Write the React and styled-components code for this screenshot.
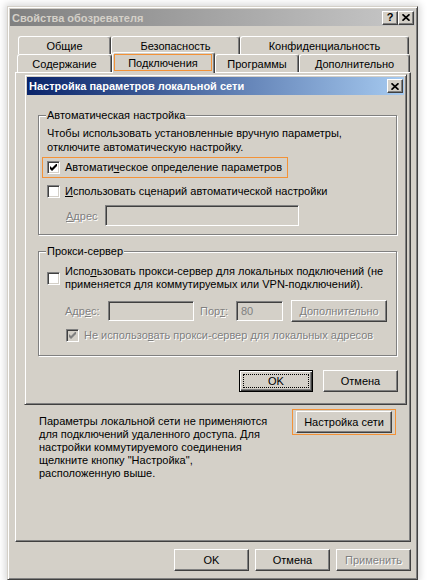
import React from 'react';
import styled, { createGlobalStyle, css } from 'styled-components';

const GlobalStyle = createGlobalStyle`
  html, body {
    margin: 0;
    padding: 0;
    background: #fff;
  }
  body {
    font-family: "Liberation Sans", Arial, sans-serif;
    font-size: 11px;
    color: #000;
  }
  #root {
    padding: 6px 0 0 7px;
  }
`;

const raised = css`
  border: 1px solid;
  border-color: #fff #404040 #404040 #fff;
  box-shadow: inset -1px -1px 0 #808080;
`;

const sunken = css`
  border: 1px solid;
  border-color: #808080 #fff #fff #808080;
  box-shadow: inset 1px 1px 0 #404040, inset -1px -1px 0 #d4d0c8;
`;

const disabledText = css`
  color: #808080;
  text-shadow: 1px 1px 0 #fff;
`;

const Window = styled.div`
  box-sizing: border-box;
  width: 411px;
  height: 574px;
  background: #d4d0c8;
  border: 1px solid;
  border-color: #d4d0c8 #404040 #404040 #d4d0c8;
  box-shadow: inset 1px 1px 0 #fff, inset -1px -1px 0 #808080,
    0 0 7px 2px rgba(0, 0, 0, 0.16);
  padding: 2px;
  display: flex;
  flex-direction: column;
`;

const TitleBar = styled.div`
  height: 17px;
  display: flex;
  align-items: center;
  padding: 0 1px 0 2px;
  background: ${p => p.$active
    ? 'linear-gradient(to right, #0a246a, #a6caf0)'
    : 'linear-gradient(to right, #808080, #c8c8c8)'};
  color: ${p => (p.$active ? '#fff' : '#d4d0c8')};
  font-weight: bold;
  font-size: 11px;
`;

const TitleText = styled.span`
  flex: 1;
  white-space: nowrap;
`;

const CaptionButton = styled.div`
  box-sizing: border-box;
  width: 16px;
  height: 14px;
  background: #d4d0c8;
  ${raised};
  display: flex;
  align-items: center;
  justify-content: center;
  color: #000;
  font-weight: bold;
  font-size: 11px;
  line-height: 1;
`;

const Body = styled.div`
  flex: 1;
  display: flex;
  flex-direction: column;
  padding: 10px 4px 0 5px;
`;

const TabRow = styled.div`
  display: flex;
  align-items: flex-start;
  height: 18px;
  padding-left: ${p => p.$indent}px;
`;

const Tab = styled.div`
  box-sizing: border-box;
  width: ${p => p.$w}px;
  height: 18px;
  background: #d4d0c8;
  border-top: 1px solid #fff;
  border-left: 1px solid #fff;
  border-right: 1px solid #404040;
  box-shadow: inset -1px 0 0 #808080;
  border-radius: 3px 3px 0 0;
  display: flex;
  align-items: center;
  justify-content: center;
  white-space: nowrap;
  ${p => p.$active && css`
    position: relative;
    z-index: 1;
    height: 21px;
    margin-top: -2px;
    align-items: flex-start;
    justify-content: flex-start;
    padding: 1px 0 0 1px;
  `}
`;

const TabMark = styled.span`
  box-sizing: border-box;
  width: 98px;
  height: 17px;
  border: 1px solid #f39237;
  display: flex;
  align-items: center;
  justify-content: center;
`;

const Panel = styled.div`
  box-sizing: border-box;
  width: 396px;
  height: 470px;
  border: 1px solid;
  border-color: #fff #404040 #404040 #fff;
  box-shadow: inset -1px -1px 0 #808080;
  padding: 1px 3px 0 8px;
  display: flex;
  flex-direction: column;
`;

const Dialog = styled.div`
  box-sizing: border-box;
  width: 383px;
  height: 331px;
  background: #d4d0c8;
  border: 1px solid;
  border-color: #d4d0c8 #404040 #404040 #d4d0c8;
  box-shadow: inset 1px 1px 0 #fff, inset -1px -1px 0 #808080;
  padding: 2px;
  display: flex;
  flex-direction: column;
`;

const DialogTitle = styled(TitleBar)`
  height: 18px;
  padding: 0 1px 0 2px;
`;

const DialogBody = styled.div`
  display: flex;
  flex-direction: column;
  padding: 0 7px 0 11px;
`;

const Group = styled.fieldset`
  margin: ${p => p.$top}px 0 0;
  padding: ${p => p.$padTop}px 8px ${p => p.$padBottom}px 8px;
  border: 1px solid #808080;
  box-shadow: inset 1px 1px 0 #fff, 1px 1px 0 #fff;
  min-width: 0;
  display: flex;
  flex-direction: column;
`;

const Legend = styled.legend`
  padding: 0 1px;
  margin-left: -1px;
  line-height: 13px;
  background: #d4d0c8;
`;

const Paragraph = styled.div`
  line-height: ${p => p.$lh}px;
  white-space: nowrap;
`;

const CheckRow = styled.div`
  display: flex;
  align-items: center;
  gap: 5px;
  min-height: 15px;
  margin-top: ${p => p.$top || 0}px;
  padding-left: ${p => p.$indent || 0}px;
  line-height: 13px;
  white-space: nowrap;
  ${p => p.$disabled && disabledText};
`;

const Highlight = styled.div`
  align-self: flex-start;
  border: 1px solid #f39237;
  padding: 2px 5px 2px 4px;
  margin: 3px 0 0 -5px;
  display: flex;
`;

const Box = styled.span`
  box-sizing: border-box;
  flex: none;
  width: 13px;
  height: 13px;
  ${sunken};
  background: ${p => (p.$disabled ? '#d4d0c8' : '#fff')};
  display: flex;
  align-items: center;
  justify-content: center;
  text-shadow: none;
`;

const FieldRow = styled.div`
  display: flex;
  align-items: center;
  height: ${p => p.$h}px;
  margin-top: ${p => p.$top}px;
  padding-left: ${p => p.$indent}px;
  white-space: nowrap;
`;

const FieldLabel = styled.span`
  width: ${p => p.$w}px;
  flex: none;
  ${disabledText};
`;

const Edit = styled.div`
  box-sizing: border-box;
  width: ${p => p.$w}px;
  height: ${p => p.$h}px;
  margin-right: ${p => p.$gap || 0}px;
  ${sunken};
  background: #d4d0c8;
  color: #808080;
  padding-left: 4px;
  display: flex;
  align-items: center;
`;

const Button = styled.div`
  box-sizing: border-box;
  flex: none;
  width: ${p => p.$w}px;
  height: 22px;
  background: #d4d0c8;
  ${raised};
  display: flex;
  align-items: center;
  justify-content: center;
  white-space: nowrap;
  ${p => p.$disabled && disabledText};
  ${p => p.$default && css`
    border: 1px solid #000;
    box-shadow: inset 1px 1px 0 #fff, inset -1px -1px 0 #404040,
      inset -2px -2px 0 #808080;
    padding: 3px;
  `}
`;

const Focus = styled.span`
  flex: 1;
  align-self: stretch;
  border: 1px dotted #000;
  display: flex;
  align-items: center;
  justify-content: center;
`;

const ButtonRow = styled.div`
  display: flex;
  justify-content: flex-end;
  gap: ${p => p.$gap}px;
  margin-top: ${p => p.$top}px;
  margin-right: ${p => p.$right || 0}px;
`;

const InfoRow = styled.div`
  display: flex;
  justify-content: space-between;
  align-items: flex-start;
  padding: 0 11px 0 15px;
`;

const InfoText = styled.div`
  margin-top: 10px;
  line-height: 13px;
  white-space: nowrap;
`;

const ButtonMark = styled.div`
  margin-top: 4px;
  border: 1px solid #f39237;
  padding: 1px 3px;
  display: flex;
`;

const U = styled.span`
  text-decoration: underline;
  text-underline-offset: 1px;
`;

const Check = ({ color = '#000' }) => (
  <svg width="7" height="7" viewBox="0 0 7 7">
    <path d="M0 2 L2 4 L7 -1 L7 2 L2 7 L0 5 Z" fill={color} />
  </svg>
);

const CloseGlyph = () => (
  <svg width="8" height="7" viewBox="0 0 8 7">
    <path d="M0.5 0.3 L7.5 6.7 M7.5 0.3 L0.5 6.7" stroke="#000" strokeWidth="1.7" />
  </svg>
);

const topTabs = [
  { label: 'Общие', w: 93 },
  { label: 'Безопасность', w: 129 },
  { label: 'Конфиденциальность', w: 169 },
];

const bottomTabs = [
  { label: 'Содержание', w: 95 },
  { label: 'Подключения', w: 103, active: true },
  { label: 'Программы', w: 84 },
  { label: 'Дополнительно', w: 111 },
];

export default function App() {
  return (
    <>
      <GlobalStyle />
      <Window>
        <TitleBar>
          <TitleText>Свойства обозревателя</TitleText>
          <CaptionButton>?</CaptionButton>
          <CaptionButton><CloseGlyph /></CaptionButton>
        </TitleBar>
        <Body>
          <TabRow $indent={3}>
            {topTabs.map(t => <Tab key={t.label} $w={t.w}>{t.label}</Tab>)}
          </TabRow>
          <TabRow $indent={2}>
            {bottomTabs.map(t => (
              <Tab key={t.label} $w={t.w} $active={t.active}>
                {t.active ? <TabMark>{t.label}</TabMark> : t.label}
              </Tab>
            ))}
          </TabRow>
          <Panel>
            <Dialog>
              <DialogTitle $active>
                <TitleText>Настройка параметров локальной сети</TitleText>
                <CaptionButton><CloseGlyph /></CaptionButton>
              </DialogTitle>
              <DialogBody>
                <Group $top={14} $padTop={4} $padBottom={8}>
                  <Legend>Автоматическая настройка</Legend>
                  <Paragraph $lh={14}>
                    Чтобы использовать установленные вручную параметры,<br />
                    отключите автоматическую настройку.
                  </Paragraph>
                  <Highlight>
                    <CheckRow>
                      <Box><Check /></Box>
                      <span>Автомати<U>ч</U>еское определение параметров</span>
                    </CheckRow>
                  </Highlight>
                  <CheckRow $top={6}>
                    <Box />
                    <span><U>И</U>спользовать сценарий автоматической настройки</span>
                  </CheckRow>
                  <FieldRow $h={21} $top={6} $indent={19}>
                    <FieldLabel $w={39}><U>А</U>дрес</FieldLabel>
                    <Edit $w={194} $h={21} />
                  </FieldRow>
                </Group>
                <Group $top={10} $padTop={7} $padBottom={12}>
                  <Legend>Прокси-сервер</Legend>
                  <CheckRow>
                    <Box />
                    <span>
                      Испо<U>л</U>ьзовать прокси-сервер для локальных подключений (не<br />
                      применяется для коммутируемых или VPN-подключений).
                    </span>
                  </CheckRow>
                  <FieldRow $h={22} $top={9} $indent={18}>
                    <FieldLabel $w={43}>Адр<U>е</U>с:</FieldLabel>
                    <Edit $w={86} $h={20} $gap={6} />
                    <FieldLabel $w={36}>Пор<U>т</U>:</FieldLabel>
                    <Edit $w={47} $h={20} $gap={8}>80</Edit>
                    <Button $w={96} $disabled><span><U>Д</U>ополнительно</span></Button>
                  </FieldRow>
                  <CheckRow $top={6} $indent={19} $disabled>
                    <Box $disabled><Check color="#808080" /></Box>
                    <span>Не использо<U>в</U>ать прокси-сервер для локальных адресов</span>
                  </CheckRow>
                </Group>
                <ButtonRow $gap={10} $top={14} $right={-1}>
                  <Button $w={74} $default><Focus>OK</Focus></Button>
                  <Button $w={75}>Отмена</Button>
                </ButtonRow>
              </DialogBody>
            </Dialog>
            <InfoRow>
              <InfoText>
                Параметры локальной сети не применяются<br />
                для подключений удаленного доступа. Для<br />
                настройки коммутируемого соединения<br />
                щелкните кнопку "Настройка",<br />
                расположенную выше.
              </InfoText>
              <ButtonMark>
                <Button $w={96}>Настройка сети</Button>
              </ButtonMark>
            </InfoRow>
          </Panel>
          <ButtonRow $gap={6} $top={7}>
            <Button $w={75}>OK</Button>
            <Button $w={75}>Отмена</Button>
            <Button $w={75} $disabled>Применить</Button>
          </ButtonRow>
        </Body>
      </Window>
    </>
  );
}
